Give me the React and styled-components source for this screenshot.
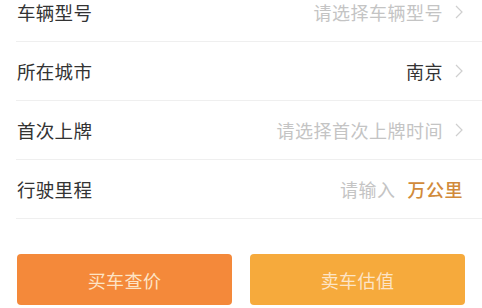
import React from "react";
import styled, { createGlobalStyle } from "styled-components";

const GlobalStyle = createGlobalStyle`
  html, body {
    margin: 0;
    padding: 0;
    background: #ffffff;
    overflow: hidden;
  }
  body {
    font-family: "Noto Sans CJK SC", "Noto Sans", sans-serif;
  }
`;

const Page = styled.div`
  width: 482px;
  height: 308px;
  background: #ffffff;
  overflow: hidden;
`;

const List = styled.div`
  display: flex;
  flex-direction: column;
  margin-top: -17px;
`;

const Row = styled.div`
  display: flex;
  align-items: center;
  justify-content: space-between;
  height: 58px;
  margin-left: 16px;
  padding: 0 19px 0 1px;
  border-bottom: 1px solid #efefef;
`;

const Label = styled.span`
  font-size: 18.5px;
  color: #333333;
  letter-spacing: 0.3px;
`;

const Value = styled.div`
  display: flex;
  align-items: center;
  gap: 12px;
`;

const ValueText = styled.span`
  font-size: 18px;
  color: ${(p) => (p.$filled ? "#333333" : "#c4c4c4")};
  letter-spacing: 0.5px;
`;

const Unit = styled.span`
  font-size: 18px;
  font-weight: 500;
  color: #d18a3a;
  letter-spacing: 0.5px;
`;

const Chevron = () => (
  <svg width="8" height="14" viewBox="0 0 8 14">
    <path
      d="M1 1 L7 7 L1 13"
      fill="none"
      stroke="#cfcfcf"
      strokeWidth="1.2"
    />
  </svg>
);

const Actions = styled.div`
  display: flex;
  gap: 18px;
  padding: 0 17px;
  margin-top: 35px;
`;

const ActionButton = styled.button`
  flex: 1;
  height: 51px;
  border: none;
  border-radius: 4px;
  background: ${(p) => p.$bg};
  color: #fde4c6;
  font-family: "Noto Sans CJK SC", "Noto Sans", sans-serif;
  font-size: 18px;
  letter-spacing: 0.4px;
  padding: 0;
`;

const rows = [
  { label: "车辆型号", value: "请选择车辆型号" },
  { label: "所在城市", value: "南京", filled: true },
  { label: "首次上牌", value: "请选择首次上牌时间" },
];

export default function App() {
  return (
    <Page>
      <GlobalStyle />
      <List>
        {rows.map((r) => (
          <Row key={r.label}>
            <Label>{r.label}</Label>
            <Value>
              <ValueText $filled={r.filled}>{r.value}</ValueText>
              <Chevron />
            </Value>
          </Row>
        ))}
        <Row>
          <Label>行驶里程</Label>
          <Value>
            <ValueText>请输入</ValueText>
            <Unit>万公里</Unit>
          </Value>
        </Row>
      </List>
      <Actions>
        <ActionButton $bg="#f4893a">买车查价</ActionButton>
        <ActionButton $bg="#f6aa3c">卖车估值</ActionButton>
      </Actions>
    </Page>
  );
}
